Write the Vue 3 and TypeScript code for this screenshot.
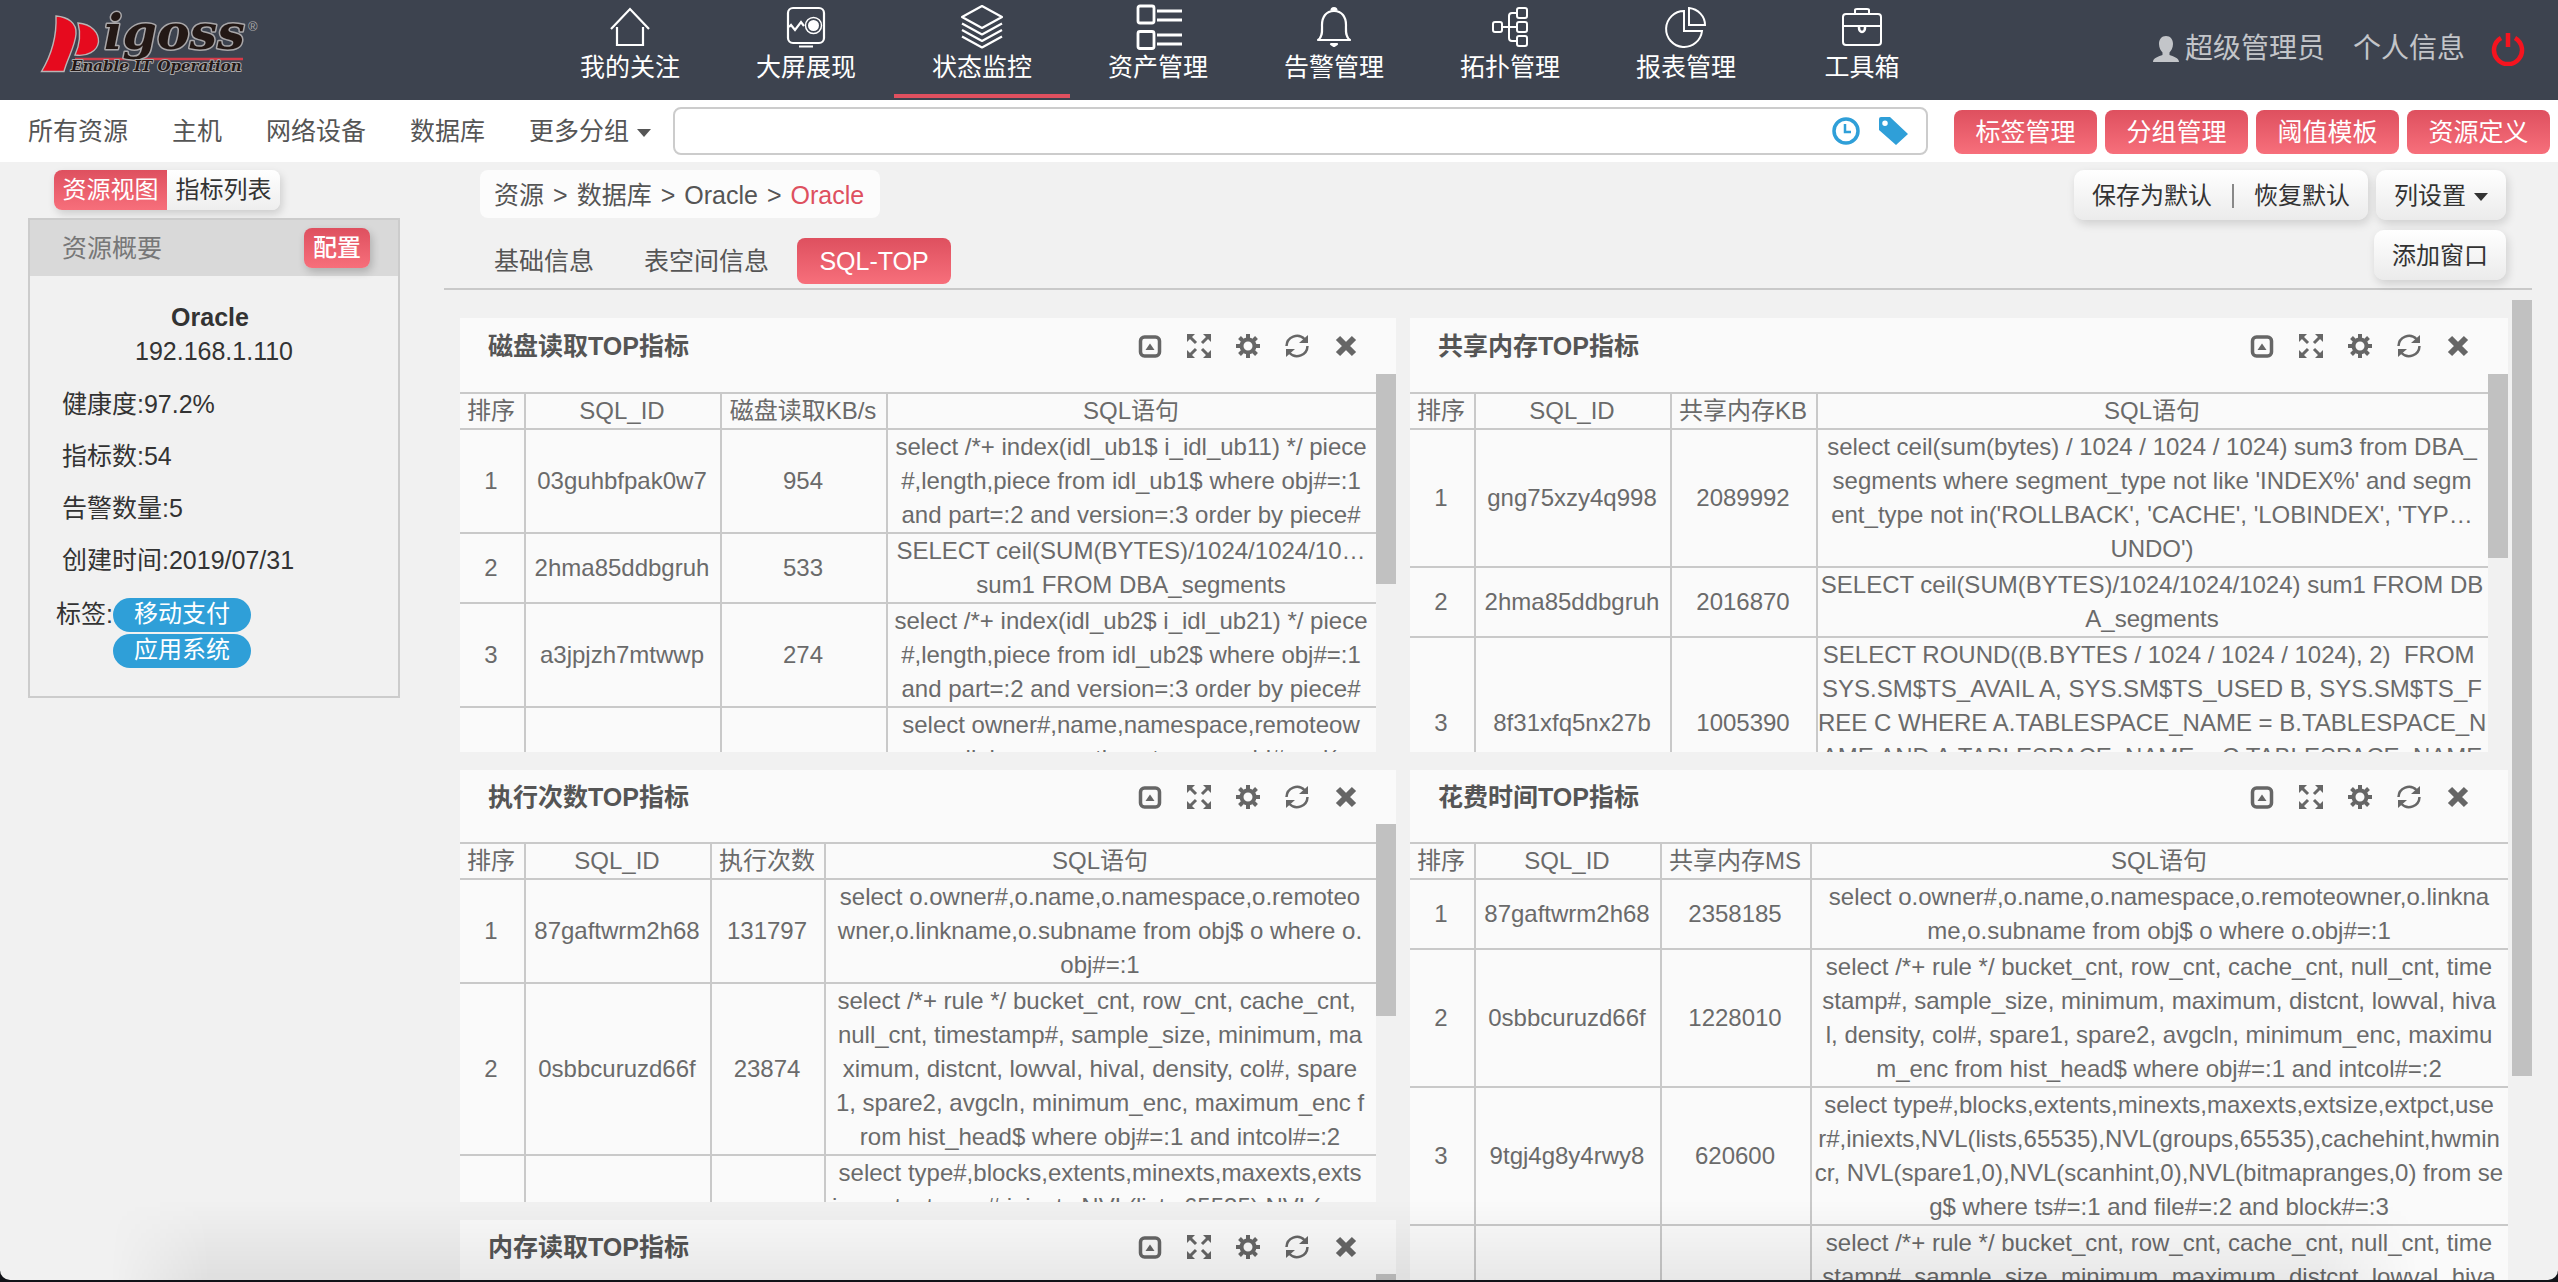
<script setup lang="ts">
interface NavItem {
  label: string
  icon: string
  active?: boolean
}
interface Row {
  rank: string
  id: string
  value: string
  sql: string[]
}
interface Panel {
  title: string
  measure: string
  idWidth: number
  measureWidth: number
  thumb: number
  rows: Row[]
}

const navItems: NavItem[] = [
  { label: '我的关注', icon: 'home' },
  { label: '大屏展现', icon: 'screen' },
  { label: '状态监控', icon: 'layers', active: true },
  { label: '资产管理', icon: 'list' },
  { label: '告警管理', icon: 'bell' },
  { label: '拓扑管理', icon: 'topology' },
  { label: '报表管理', icon: 'pie' },
  { label: '工具箱', icon: 'toolbox' },
]
const groups: string[] = ['所有资源', '主机', '网络设备', '数据库']
const manageButtons: string[] = ['标签管理', '分组管理', '阈值模板', '资源定义']
const facts: [string, string][] = [
  ['健康度', '97.2%'],
  ['指标数', '54'],
  ['告警数量', '5'],
  ['创建时间', '2019/07/31'],
]

const leftPanels: Panel[] = [
  {
    title: '磁盘读取TOP指标', measure: '磁盘读取KB/s', idWidth: 196, measureWidth: 166, thumb: 210,
    rows: [
      { rank: '1', id: '03guhbfpak0w7', value: '954', sql: ['select /*+ index(idl_ub1$ i_idl_ub11) */ piece', '#,length,piece from idl_ub1$ where obj#=:1', 'and part=:2 and version=:3 order by piece#'] },
      { rank: '2', id: '2hma85ddbgruh', value: '533', sql: ['SELECT ceil(SUM(BYTES)/1024/1024/10…', 'sum1 FROM DBA_segments'] },
      { rank: '3', id: 'a3jpjzh7mtwwp', value: '274', sql: ['select /*+ index(idl_ub2$ i_idl_ub21) */ piece', '#,length,piece from idl_ub2$ where obj#=:1', 'and part=:2 and version=:3 order by piece#'] },
      { rank: '4', id: '8swypbbr0m372', value: '198', sql: ['select owner#,name,namespace,remoteow', 'ner,linkname,p_timestamp,p_obj#, nvl(', 'property,0),subname,type#,d_attrs', 'from dependency$ d, obj$ o', 'where d_obj#=:1 and p_obj#=obj#(+)', 'order by order#'] },
    ],
  },
  {
    title: '执行次数TOP指标', measure: '执行次数', idWidth: 186, measureWidth: 114, thumb: 192,
    rows: [
      { rank: '1', id: '87gaftwrm2h68', value: '131797', sql: ['select o.owner#,o.name,o.namespace,o.remoteo', 'wner,o.linkname,o.subname from obj$ o where o.', 'obj#=:1'] },
      { rank: '2', id: '0sbbcuruzd66f', value: '23874', sql: ['select /*+ rule */ bucket_cnt, row_cnt, cache_cnt, ', 'null_cnt, timestamp#, sample_size, minimum, ma', 'ximum, distcnt, lowval, hival, density, col#, spare', '1, spare2, avgcln, minimum_enc, maximum_enc f', 'rom hist_head$ where obj#=:1 and intcol#=:2'] },
      { rank: '3', id: '9tgj4g8y4rwy8', value: '12206', sql: ['select type#,blocks,extents,minexts,maxexts,exts', 'ize,extpct,user#,iniexts,NVL(lists,65535),NVL(grou', 'ps,65535),cachehint,hwmincr, NVL(spare1,0)', ',NVL(scanhint,0),NVL(bitmapranges,0) from', 'seg$ where ts#=:1 and file#=:2 and block#=:3'] },
    ],
  },
  { title: '内存读取TOP指标', measure: '内存读取', idWidth: 186, measureWidth: 114, thumb: 192, rows: [] },
]
const rightPanels: Panel[] = [
  {
    title: '共享内存TOP指标', measure: '共享内存KB', idWidth: 196, measureWidth: 146, thumb: 184,
    rows: [
      { rank: '1', id: 'gng75xzy4q998', value: '2089992', sql: ['select ceil(sum(bytes) / 1024 / 1024 / 1024) sum3 from DBA_', "segments where segment_type not like 'INDEX%' and segm", "ent_type not in('ROLLBACK', 'CACHE', 'LOBINDEX', 'TYP…", "UNDO')"] },
      { rank: '2', id: '2hma85ddbgruh', value: '2016870', sql: ['SELECT ceil(SUM(BYTES)/1024/1024/1024) sum1 FROM DB', 'A_segments'] },
      { rank: '3', id: '8f31xfq5nx27b', value: '1005390', sql: ['SELECT ROUND((B.BYTES / 1024 / 1024 / 1024), 2)  FROM ', 'SYS.SM$TS_AVAIL A, SYS.SM$TS_USED B, SYS.SM$TS_F', 'REE C WHERE A.TABLESPACE_NAME = B.TABLESPACE_N', 'AME AND A.TABLESPACE_NAME = C.TABLESPACE_NAME', "AND A.TABLESPACE_NAME = 'SYSTEM'"] },
    ],
  },
  {
    title: '花费时间TOP指标', measure: '共享内存MS', idWidth: 186, measureWidth: 150, thumb: 0,
    rows: [
      { rank: '1', id: '87gaftwrm2h68', value: '2358185', sql: ['select o.owner#,o.name,o.namespace,o.remoteowner,o.linkna', 'me,o.subname from obj$ o where o.obj#=:1'] },
      { rank: '2', id: '0sbbcuruzd66f', value: '1228010', sql: ['select /*+ rule */ bucket_cnt, row_cnt, cache_cnt, null_cnt, time', 'stamp#, sample_size, minimum, maximum, distcnt, lowval, hiva', 'l, density, col#, spare1, spare2, avgcln, minimum_enc, maximu', 'm_enc from hist_head$ where obj#=:1 and intcol#=:2'] },
      { rank: '3', id: '9tgj4g8y4rwy8', value: '620600', sql: ['select type#,blocks,extents,minexts,maxexts,extsize,extpct,use', 'r#,iniexts,NVL(lists,65535),NVL(groups,65535),cachehint,hwmin', 'cr, NVL(spare1,0),NVL(scanhint,0),NVL(bitmapranges,0) from se', 'g$ where ts#=:1 and file#=:2 and block#=:3'] },
      { rank: '4', id: '96g93hntrzjtr', value: '411870', sql: ['select /*+ rule */ bucket_cnt, row_cnt, cache_cnt, null_cnt, time', 'stamp#, sample_size, minimum, maximum, distcnt, lowval, hiva', 'l, density, col#, spare1, spare2, avgcln, minimum_enc, maximu', 'm_enc from hist_head$ where obj#=:1 and intcol#=:2'] },
    ],
  },
]
const columns: Panel[][] = [leftPanels, rightPanels]
</script>

<template>
  <div class="window">
    <header class="topbar">
      <a class="logo" href="#" aria-label="Pigoss">
        <svg width="224" height="64" viewBox="38 12 224 64">
          <g fill="#e60a1e" stroke="#b9b4b4" stroke-width="1.4">
            <path d="M56 16C68 17 77 23 76 34C75 47 67 59 64 71.500H41.500C49 59 57 40 56 16Z" />
            <path d="M78 23C92 24 99 33 98.500 42C97.500 51 87 57 75 55C80 44 81 34 78 23Z" />
          </g>
          <path d="M75 59H243" stroke="#d63a48" stroke-width="2.500" />
          <g class="logo-text">
            <text x="104" y="49" font-size="49" stroke-width="3">igoss</text>
            <text x="71" y="71" font-size="15" stroke-width="2">Enable IT Operation</text>
          </g>
          <text class="logo-mark" x="248" y="31" font-size="13">®</text>
        </svg>
      </a>
      <nav class="nav">
        <a v-for="item in navItems" :key="item.label" href="#" class="nav-item" :class="{ active: item.active }">
          <svg width="44" height="52" viewBox="0 0 44 52" fill="none" stroke="#fff" stroke-width="2.2">
            <g v-if="item.icon === 'home'">
              <path d="M3 29L22 9L41 29M9 27V45H35V27" />
            </g>
            <g v-else-if="item.icon === 'screen'">
              <rect x="4" y="8" width="36" height="35" rx="5" />
              <path d="M5 27L7 25L11 30L17 22L20 26M15 46.500H29" />
              <circle cx="29.500" cy="25.500" r="8" stroke-width="1.500" />
              <circle cx="29.500" cy="25.500" r="5.500" fill="#fff" stroke="none" />
            </g>
            <g v-else-if="item.icon === 'layers'" stroke-linejoin="round">
              <path d="M22 6L42 17L22 28L2 17ZM2 23.500L22 34.500L42 23.500M2 30L22 41L42 30M2 36.500L22 47.500L42 36.500" />
            </g>
            <g v-else-if="item.icon === 'list'" stroke-width="2.800">
              <rect x="2" y="6" width="16" height="17" rx="2" />
              <rect x="2" y="31.500" width="16" height="17" rx="2" />
              <path d="M21 11H46M21 20H46M21 35H46M21 44H46" />
            </g>
            <g v-else-if="item.icon === 'bell'" stroke-linejoin="round">
              <path d="M6 40C11 37 10 30 10 25C10 17 14 11 22 11C30 11 34 17 34 25C34 30 33 37 38 40Z" />
              <path d="M19.500 10.500A2.500 2.500 0 0 1 24.500 10.500M19 44H25L22 46Z" fill="#fff" />
            </g>
            <g v-else-if="item.icon === 'topology'" stroke-width="2">
              <rect x="5" y="22" width="9" height="10" rx="2" />
              <rect x="29" y="8" width="10" height="10" rx="2" />
              <rect x="29" y="22" width="10" height="10" rx="2" />
              <rect x="29" y="36" width="10" height="10" rx="2" />
              <path d="M14 27H29M29 13H24Q21 13 21 16V38Q21 41 24 41H29" />
            </g>
            <g v-else-if="item.icon === 'pie'" stroke-width="2">
              <path d="M20 11A18 18 0 1 0 38 31H20Z" />
              <path d="M25 8A18 17 0 0 1 41 25H25Z" />
            </g>
            <g v-else stroke-width="2">
              <rect x="3" y="14" width="38" height="31" rx="3" />
              <path d="M15 14V10Q15 9 17 9H27Q29 9 29 10V14M3 26H41" />
              <path d="M19 26V28A3 4 0 0 0 25 28V26" stroke-width="2.500" />
            </g>
          </svg>
          <span>{{ item.label }}</span>
        </a>
      </nav>
      <div class="user">
        <svg width="28" height="28" viewBox="0 0 28 28" fill="#c3c5c9">
          <path d="M14 1C18.500 1 21 4.500 21 9C21 13 19 16 17.500 17.500V20C21 21.500 27 22.500 27 27H1C1 22.500 7 21.500 10.500 20V17.500C9 16 7 13 7 9C7 4.500 9.500 1 14 1Z" />
        </svg>
        <a href="#" class="user-name">超级管理员</a>
        <a href="#" class="profile">个人信息</a>
        <button type="button" class="power" aria-label="退出">
          <svg width="34" height="34" viewBox="0 0 34 34" fill="none" stroke="#f5141f" stroke-width="4.500">
            <path d="M10 6A14 14 0 1 0 24 6M17 1V15" />
          </svg>
        </button>
      </div>
    </header>

    <div class="subbar">
      <a v-for="group in groups" :key="group" href="#">{{ group }}</a>
      <a href="#" class="more">更多分组<i class="caret"></i></a>
      <div class="search">
        <input type="text" aria-label="搜索资源" />
        <svg width="28" height="28" viewBox="0 0 28 28" fill="none" stroke="#2f9fd8" stroke-width="3.500">
          <circle cx="14" cy="14" r="12" />
          <path d="M13 7V15H19" stroke-width="2.500" />
        </svg>
        <svg width="30" height="28" viewBox="0 0 30 28" fill="#2f9fd8">
          <path fill-rule="evenodd" d="M1 2Q1 0 3 0H12L30 17L18 28L1 13ZM7 3.500A2.700 2.700 0 1 0 7 9A2.700 2.700 0 1 0 7 3.500Z" />
        </svg>
      </div>
      <div class="manage">
        <button v-for="label in manageButtons" :key="label" type="button" class="red">{{ label }}</button>
      </div>
    </div>

    <div class="page">
      <aside class="side">
        <div class="toggle">
          <button type="button" class="red">资源视图</button>
          <button type="button">指标列表</button>
        </div>
        <section class="summary">
          <header>
            <h2>资源概要</h2>
            <button type="button" class="red">配置</button>
          </header>
          <div class="summary-body">
            <strong>Oracle</strong>
            <span class="address">192.168.1.110</span>
            <p v-for="[name, value] in facts" :key="name">{{ name }}:{{ value }}</p>
            <div class="tags">
              <span>标签:</span>
              <ul>
                <li>移动支付</li>
                <li>应用系统</li>
              </ul>
            </div>
          </div>
        </section>
      </aside>

      <main class="main">
        <div class="toolbar">
          <div class="toolbar-left">
            <nav class="crumbs">
              <a href="#">资源</a><i>&gt;</i><a href="#">数据库</a><i>&gt;</i><a href="#">Oracle</a><i>&gt;</i><a href="#" class="current">Oracle</a>
            </nav>
            <nav class="tabs">
              <a href="#">基础信息</a>
              <a href="#">表空间信息</a>
              <a href="#" class="red">SQL-TOP</a>
            </nav>
          </div>
          <div class="toolbar-right">
            <div class="row">
              <div class="light pair">
                <button type="button">保存为默认</button>
                <span class="divider"></span>
                <button type="button">恢复默认</button>
              </div>
              <button type="button" class="light">列设置<i class="caret"></i></button>
            </div>
            <button type="button" class="light">添加窗口</button>
          </div>
        </div>

        <div class="board">
          <div class="columns">
            <div v-for="(column, c) in columns" :key="c" class="column">
              <section v-for="panel in column" :key="panel.title" class="panel">
                <header>
                  <h3>{{ panel.title }}</h3>
                  <div class="actions">
                    <button type="button" aria-label="折叠">
                      <svg width="24" height="24" viewBox="0 0 24 24">
                        <rect x="2.500" y="3" width="19" height="19" rx="4" fill="none" stroke="#666" stroke-width="3.500" />
                        <path d="M7.500 16L12 9.500L16.500 16Z" fill="#666" />
                      </svg>
                    </button>
                    <button type="button" aria-label="全屏">
                      <svg width="24" height="24" viewBox="0 0 24 24" fill="#666" stroke="#666" stroke-width="3">
                        <path d="M3 3L9 9M21 3L15 9M3 21L9 15M21 21L15 15" />
                        <path stroke="none" d="M0 0H8L0 8ZM24 0V8L16 0ZM0 24V16L8 24ZM24 24H16L24 16Z" />
                      </svg>
                    </button>
                    <button type="button" aria-label="设置">
                      <svg width="24" height="24" viewBox="0 0 24 24" fill="none" stroke="#666">
                        <circle cx="12" cy="12" r="6.500" stroke-width="4" />
                        <path stroke-width="4" d="M12 0V4M12 20V24M0 12H4M20 12H24M3.500 3.500L6.500 6.500M17.500 17.500L20.500 20.500M3.500 20.500L6.500 17.500M17.500 6.500L20.500 3.500" />
                      </svg>
                    </button>
                    <button type="button" aria-label="刷新">
                      <svg width="24" height="24" viewBox="0 0 24 24" fill="none" stroke="#666" stroke-width="2.500">
                        <path d="M1.500 12A10.500 10.500 0 0 1 19.500 5M22.500 12A10.500 10.500 0 0 1 4.500 19" />
                        <path fill="#666" stroke="none" d="M23 1V9H14ZM1 23V15H10Z" />
                      </svg>
                    </button>
                    <button type="button" aria-label="关闭">
                      <svg width="24" height="24" viewBox="0 0 24 24" stroke="#666" stroke-width="6">
                        <path d="M4 4L20 20M20 4L4 20" />
                      </svg>
                    </button>
                  </div>
                </header>
                <div class="panel-body" :class="{ open: !panel.thumb }">
                  <div class="table-wrap">
                    <table>
                      <colgroup>
                        <col class="rank-col" />
                        <col :style="{ width: panel.idWidth + 'px' }" />
                        <col :style="{ width: panel.measureWidth + 'px' }" />
                        <col />
                      </colgroup>
                      <thead>
                        <tr>
                          <th>排序</th>
                          <th>SQL_ID</th>
                          <th>{{ panel.measure }}</th>
                          <th>SQL语句</th>
                        </tr>
                      </thead>
                      <tbody>
                        <tr v-for="row in panel.rows" :key="row.rank">
                          <td>{{ row.rank }}</td>
                          <td>{{ row.id }}</td>
                          <td>{{ row.value }}</td>
                          <td>{{ row.sql.join('\n') }}</td>
                        </tr>
                      </tbody>
                    </table>
                  </div>
                  <div v-if="panel.thumb" class="track">
                    <div class="thumb" :style="{ height: panel.thumb + 'px' }"></div>
                  </div>
                </div>
              </section>
            </div>
          </div>
          <div class="track board-track"><div class="thumb"></div></div>
        </div>
      </main>
    </div>
    <div class="bottom-shade"></div>
  </div>
</template>

<style>
body {
  margin: 0;
  background: #111318;
}
</style>

<style scoped>
* {
  box-sizing: border-box;
}
.window {
  position: relative;
  display: flex;
  flex-direction: column;
  height: calc(100vh - 2px);
  overflow: hidden;
  border-radius: 0 0 10px 10px;
  background: #f1f1f1;
  color: #555;
  font: 25px/34px "Liberation Sans", "Noto Sans CJK SC", sans-serif;
}
a {
  color: inherit;
  text-decoration: none;
}
button {
  border: 0;
  padding: 0;
  background: none;
  color: #333;
  font: inherit;
  white-space: nowrap;
}
svg {
  display: block;
  flex: none;
}
h2, h3, p, ul {
  margin: 0;
  padding: 0;
  font: inherit;
  list-style: none;
}
i {
  font-style: normal;
}
.red {
  border-radius: 8px;
  background: linear-gradient(#de505f, #f76f7b);
  color: #fff;
}
.caret {
  display: inline-block;
  margin-left: 8px;
  border: 7px solid transparent;
  border-top: 8px solid currentColor;
  border-bottom: 0;
  vertical-align: 3px;
}

/* top bar */
.topbar {
  display: flex;
  flex: none;
  height: 100px;
  background: #3d434f;
  color: #fff;
}
.logo {
  width: 504px;
  margin-left: 38px;
  padding-top: 12px;
}
.logo svg {
  overflow: visible;
}
.logo-text {
  fill: #231815;
  stroke: #a9a7a9;
  paint-order: stroke;
  stroke-linejoin: round;
  font-family: "DejaVu Serif", serif;
  font-weight: bold;
  font-style: italic;
}
.logo-mark {
  fill: #a9a7a9;
}
.nav {
  display: flex;
}
.nav-item {
  display: flex;
  flex-direction: column;
  align-items: center;
  width: 176px;
  height: 98px;
  line-height: 30px;
}
.nav-item svg {
  overflow: visible;
}
.nav-item.active {
  border-bottom: 4px solid #e0505f;
}
.user {
  display: flex;
  align-items: center;
  margin-left: auto;
  padding: 0 33px 2px 0;
  color: #c3c5c9;
  font-size: 28px;
}
.user-name {
  margin-left: 5px;
}
.profile {
  margin: 0 26px 0 28px;
}

/* group bar */
.subbar {
  display: flex;
  flex: none;
  align-items: center;
  gap: 44px;
  height: 62px;
  padding: 0 8px 0 28px;
  background: #fff;
}
.search {
  display: flex;
  flex: 1;
  align-items: center;
  gap: 18px;
  height: 48px;
  margin: 0 -18px 0 -22px;
  padding-right: 18px;
  border: 2px solid #ccc;
  border-radius: 8px;
}
.search input {
  flex: 1;
  min-width: 0;
  padding: 0 12px;
  border: 0;
  outline: 0;
  background: none;
  font: inherit;
}
.manage {
  display: flex;
  gap: 8px;
  padding-top: 2px;
}
.manage button {
  width: 143px;
  height: 44px;
}

/* side column */
.page {
  display: flex;
  flex: 1;
  min-height: 0;
}
.side {
  flex: none;
  width: 444px;
  padding: 8px 44px 0 28px;
}
.toggle {
  display: flex;
  width: 226px;
  height: 40px;
  margin-left: 26px;
  border-radius: 8px;
  background: linear-gradient(#fff, #eee);
  box-shadow: 2px 4px 8px rgba(0, 0, 0, 0.15);
}
.toggle button {
  flex: 1;
  font-size: 24px;
}
.toggle .red {
  border-radius: 8px 0 0 8px;
}
.summary {
  margin-top: 8px;
  border: 2px solid #ccc;
}
.summary header {
  display: flex;
  align-items: center;
  justify-content: space-between;
  height: 56px;
  padding: 0 28px 0 32px;
  background: #d9d9d9;
  color: #777;
}
.summary header button {
  width: 66px;
  height: 40px;
  box-shadow: 2px 4px 8px rgba(0, 0, 0, 0.2);
  font-size: 24px;
  font-weight: 500;
}
.summary-body {
  display: flex;
  flex-direction: column;
  padding: 24px 0 28px 32px;
  color: #333;
}
.summary-body strong {
  margin-right: 40px;
  text-align: center;
}
.address {
  margin: 0 32px 10px 0;
  text-align: center;
}
.summary-body p {
  line-height: 52px;
}
.tags {
  display: flex;
  margin-left: -6px;
  padding-top: 12px;
}
.tags ul {
  display: flex;
  flex-direction: column;
  gap: 2px;
}
.tags li {
  width: 138px;
  height: 34px;
  border-radius: 17px;
  background: #2f9fd8;
  color: #fff;
  font-size: 24px;
  line-height: 32px;
  text-align: center;
}
.tags span {
  line-height: 32px;
}

/* main column */
.main {
  display: flex;
  flex: 1;
  flex-direction: column;
  min-width: 0;
  margin-right: 26px;
}
.toolbar {
  display: flex;
  flex: none;
  justify-content: space-between;
  height: 128px;
  padding: 8px 26px 0 36px;
  border-bottom: 2px solid #c9c9c9;
}
.crumbs {
  display: flex;
  align-items: center;
  width: fit-content;
  height: 48px;
  padding: 2px 16px 0 14px;
  border-radius: 8px;
  background: #fcfcfc;
}
.crumbs i {
  margin: 0 9px;
}
.crumbs .current {
  color: #de505f;
}
.tabs {
  display: flex;
  align-items: center;
  gap: 28px;
  margin-top: 20px;
  padding-left: 14px;
  line-height: 46px;
}
.tabs a + a {
  margin-left: 22px;
}
.tabs .red {
  width: 154px;
  text-align: center;
}
.tabs a + .red {
  margin-left: 0;
}
.toolbar-right {
  display: flex;
  flex-direction: column;
  align-items: flex-end;
  gap: 10px;
  font-size: 24px;
}
.row {
  display: flex;
  gap: 8px;
}
.light {
  height: 50px;
  padding: 2px 18px 0;
  border-radius: 10px;
  background: linear-gradient(#fff, #ebebeb);
  box-shadow: 2px 4px 10px rgba(0, 0, 0, 0.14);
}
.pair {
  display: flex;
  align-items: center;
  gap: 20px;
}
.divider {
  width: 2px;
  height: 24px;
  background: #888;
}
.board {
  display: flex;
  flex: 1;
  min-height: 0;
  overflow: hidden;
}
.columns {
  display: flex;
  flex: 1;
  gap: 14px;
  min-width: 0;
  padding: 28px 4px 0 16px;
}
.column {
  display: flex;
  flex: 936;
  flex-direction: column;
  gap: 18px;
  min-width: 0;
}
.column + .column {
  flex: 1098;
}
.panel {
  flex: none;
}
.panel header {
  display: flex;
  align-items: center;
  justify-content: space-between;
  height: 54px;
  padding: 0 38px 0 28px;
  background: #fafafa;
}
.panel:first-child header {
  height: 56px;
}
.panel h3 {
  font-weight: bold;
}
.actions {
  display: flex;
  gap: 25px;
}
.panel-body {
  display: flex;
  height: 378px;
  overflow: hidden;
}
.panel-body.open {
  height: auto;
}
.table-wrap {
  flex: 1;
  min-width: 0;
  padding-top: 18px;
  background: #fafafa;
}
table {
  width: 100%;
  border-spacing: 0;
  table-layout: fixed;
  color: #6a6a6a;
  font-size: 24px;
}
.rank-col {
  width: 66px;
}
th, td {
  padding: 0 2px 2px 0;
  border: 0 solid #c9c9c9;
  border-width: 0 2px 2px 0;
  font-weight: normal;
  line-height: 34px;
  text-align: center;
  white-space: pre;
}
th, td {
  padding-bottom: 0;
}
th {
  border-top-width: 2px;
}
th:last-child, td:last-child {
  border-right: 0;
}
.track {
  flex: none;
  width: 20px;
  background: #f1f1f1;
}
.thumb {
  background: #c1c1c1;
}
.board-track {
  margin-top: 10px;
}
.board-track .thumb {
  height: 776px;
}

/* soft shade rising from the window's lower edge */
.bottom-shade {
  position: absolute;
  right: 140px;
  bottom: 0;
  left: 110px;
  height: 80px;
  background: linear-gradient(transparent, rgba(0, 0, 0, 0.07));
  mask-image: linear-gradient(90deg, transparent, #000 100px, #000 calc(100% - 100px), transparent);
  pointer-events: none;
}
</style>
